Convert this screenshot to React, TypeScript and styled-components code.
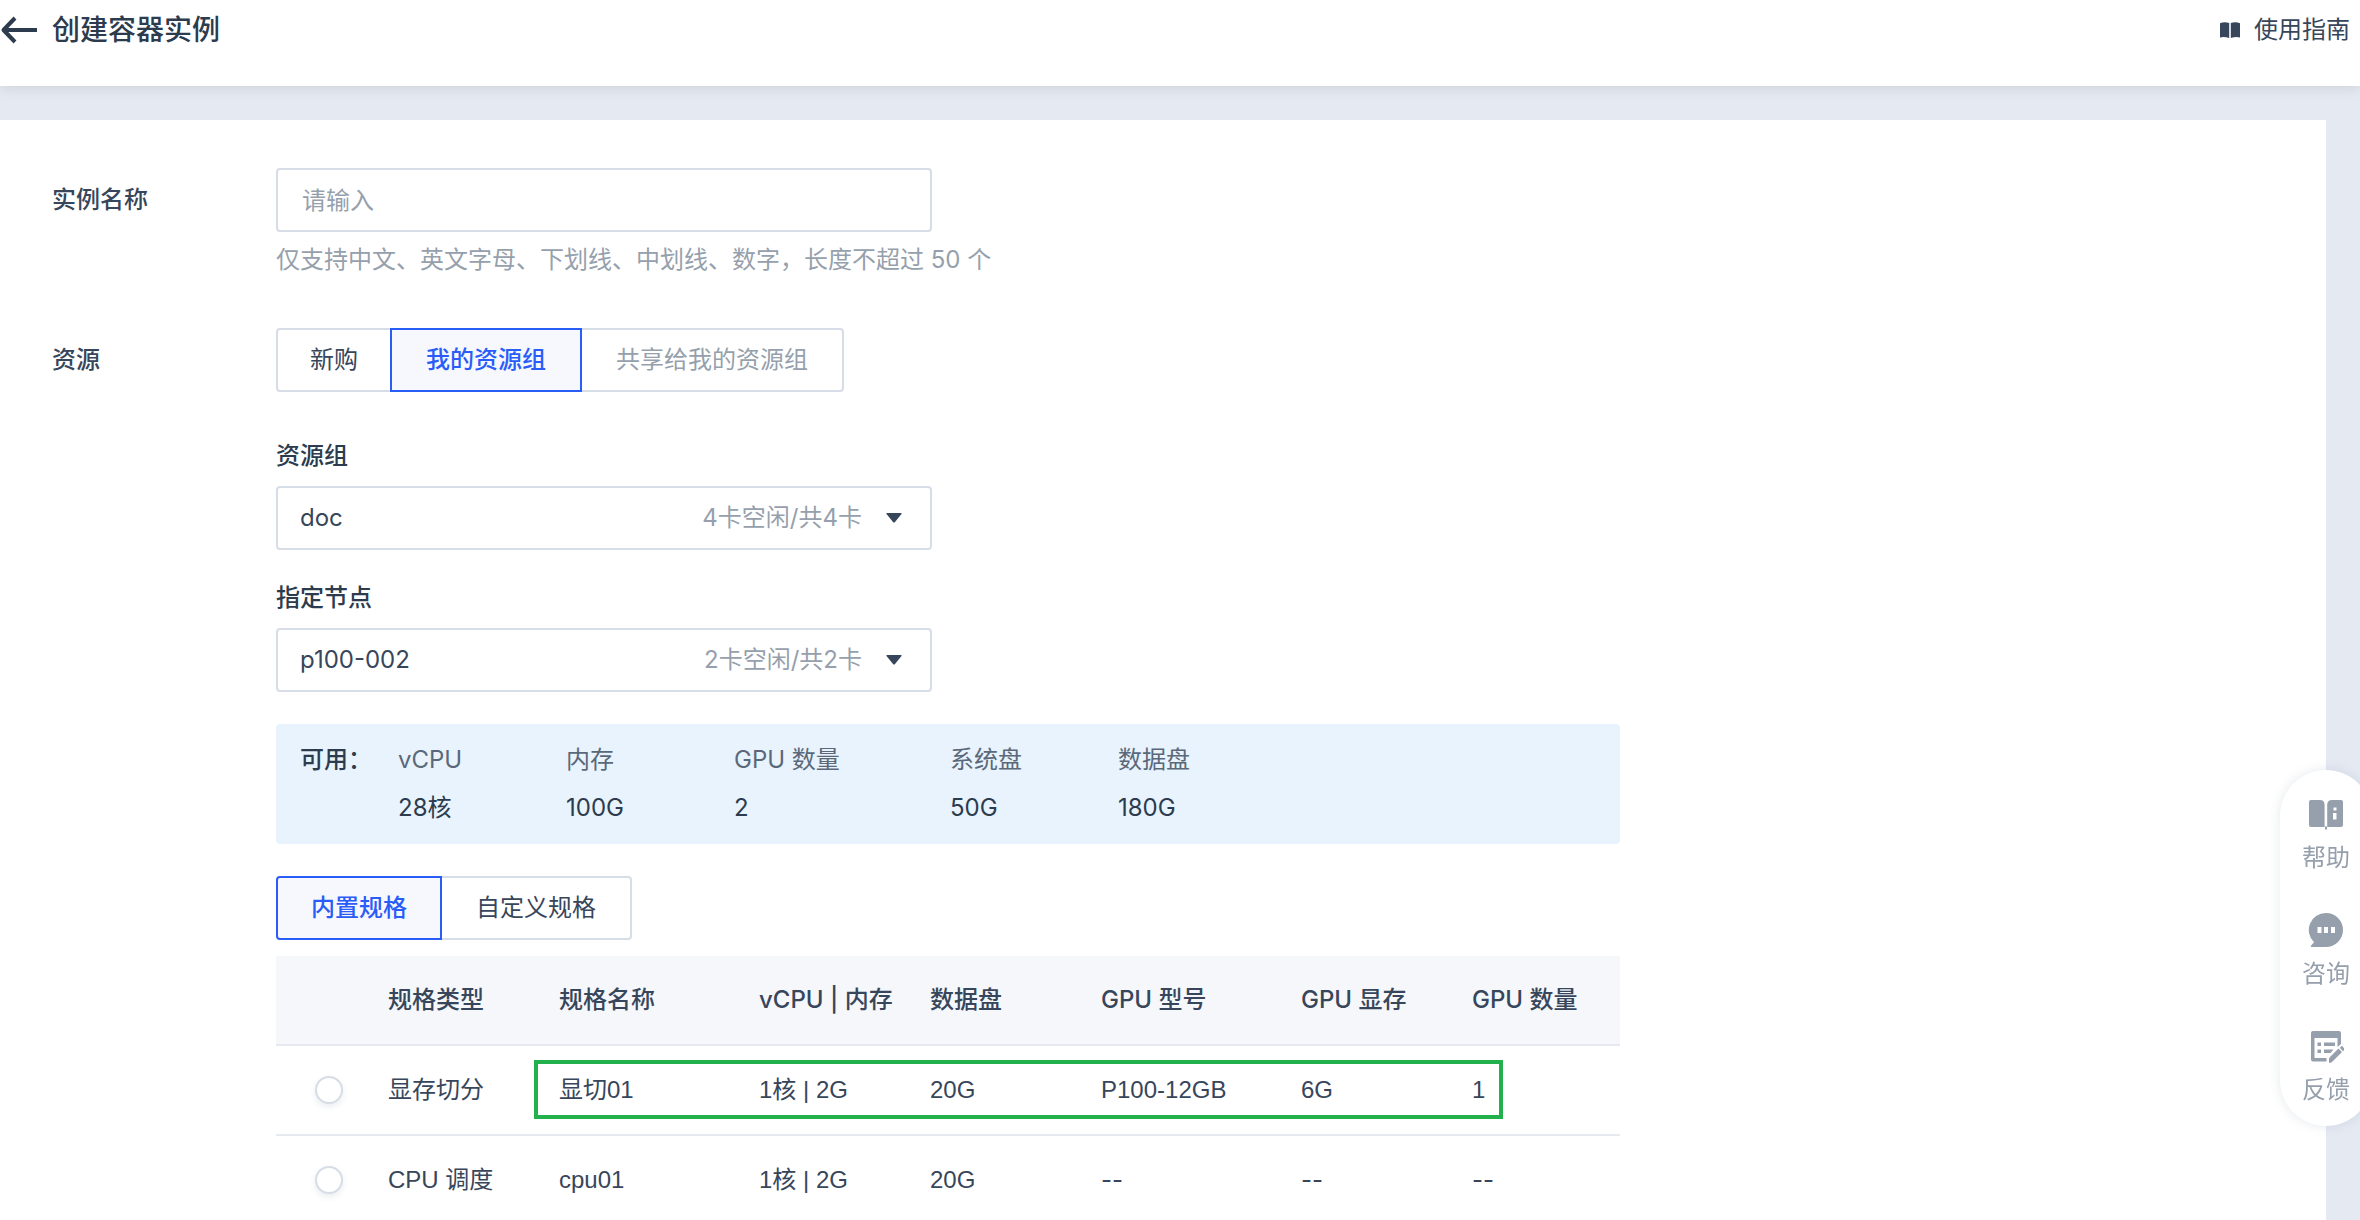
import React, { useState } from "react";
import styled, { createGlobalStyle } from "styled-components";

const color = {
  ink: "#2c3b4d",
  text: "#37465a",
  subtle: "#5a6879",
  muted: "#969fac",
  line: "#d6dde7",
  rule: "#e6eaf0",
  primary: "#2a5cf8",
  primaryBg: "#f6f8fe",
  page: "#e5e9f2",
};

const uiFont = `Inter, "Noto Sans CJK SC", sans-serif`;
const tableFont = `"Liberation Sans", "Noto Sans CJK SC", sans-serif`;

const GlobalStyle = createGlobalStyle`
  *, *::before, *::after { box-sizing: border-box; }
  body { margin: 0; background: ${color.page}; }
  button, input, select { font: inherit; color: inherit; margin: 0; }
`;

const Shell = styled.div`
  height: 100vh;
  display: flex;
  flex-direction: column;
  overflow: hidden;
  background: ${color.page};
  color: ${color.text};
  font-family: ${uiFont};
  font-size: 24px;
  line-height: 36px;
`;

const Header = styled.header`
  position: relative;
  z-index: 1;
  flex: none;
  display: flex;
  align-items: flex-start;
  justify-content: space-between;
  padding: 12px 10px 38px 0;
  background: #fff;
  box-shadow: 0 2px 12px rgba(100, 110, 100, 0.18);
`;

const TitleGroup = styled.div`
  display: flex;
  align-items: center;
  gap: 14px;
`;

const BackButton = styled.button`
  display: flex;
  width: 38px;
  height: 36px;
  padding: 0;
  border: 0;
  background: none;
  color: ${color.ink};
  cursor: pointer;
`;

const Title = styled.h1`
  margin: 0;
  font-size: 28px;
  line-height: 36px;
  font-weight: 500;
  color: ${color.ink};
`;

const GuideLink = styled.a`
  display: flex;
  align-items: center;
  gap: 14px;
  color: ${color.text};
  text-decoration: none;
`;

const Scroller = styled.main`
  flex: 1;
  min-height: 0;
  overflow: auto;
  scrollbar-width: none;
  padding: 34px 34px 0 0;
`;

const Panel = styled.form`
  display: flex;
  flex-direction: column;
  gap: 50px;
  padding: 48px 52px;
  background: #fff;
`;

const FormRow = styled.div`
  display: grid;
  grid-template-columns: 224px minmax(0, 1fr);
`;

const rowLabel = `
  line-height: 64px;
  font-weight: 500;
  color: ${color.text};
`;
const RowLabel = styled.label`${rowLabel}`;
const RowTitle = styled.span`${rowLabel}`;

const TextInput = styled.input`
  display: block;
  width: 100%;
  max-width: 656px;
  height: 64px;
  padding: 0 24px;
  border: 2px solid ${color.line};
  border-radius: 4px;
  background: #fff;
  outline: 0;
  &::placeholder { color: ${color.muted}; opacity: 1; }
`;

const Hint = styled.p`
  margin: 10px 0 0;
  color: ${color.muted};
`;

const Segmented = styled.div`
  display: flex;
  & > * + * { margin-left: -2px; }
`;

const Segment = styled.button<{ $width: number; $active?: boolean }>`
  position: relative;
  z-index: ${(p) => (p.$active ? 1 : 0)};
  width: ${(p) => p.$width}px;
  height: 64px;
  padding: 0;
  border: 2px solid ${(p) => (p.$active ? color.primary : color.line)};
  background: ${(p) => (p.$active ? color.primaryBg : "#fff")};
  color: ${(p) => (p.$active ? color.primary : color.text)};
  font-weight: ${(p) => (p.$active ? 500 : 400)};
  white-space: nowrap;
  cursor: pointer;
  &:first-child { border-radius: 4px 0 0 4px; }
  &:last-child { border-radius: 0 4px 4px 0; }
  &:disabled { color: ${color.muted}; cursor: not-allowed; }
`;

const Field = styled.div<{ $gap: number }>`
  display: flex;
  flex-direction: column;
  gap: 14px;
  max-width: 656px;
  margin-top: ${(p) => p.$gap}px;
`;

const FieldLabel = styled.label`
  line-height: 32px;
  font-weight: 500;
  color: ${color.ink};
`;

const SelectBox = styled.div`
  display: flex;
  align-items: center;
  height: 64px;
  padding-right: 28px;
  border: 2px solid ${color.line};
  border-radius: 4px;
`;

const Select = styled.select`
  flex: 1;
  min-width: 0;
  height: 60px;
  padding: 0 22px;
  border: 0;
  background: none;
  appearance: none;
  outline: 0;
`;

const SelectNote = styled.span`
  margin-right: 24px;
  color: ${color.muted};
`;

const Specs = styled.div`
  max-width: 1344px;
`;

const Quota = styled.dl`
  display: grid;
  grid-template-columns: 98px 168px 168px 216px 168px 1fr;
  margin: 32px 0;
  padding: 12px 24px;
  border-radius: 4px;
  background: #e8f3fd;
  line-height: 48px;
`;

const QuotaTitle = styled.dt`
  font-weight: 500;
  color: ${color.ink};
`;

const QuotaItem = styled.div`
  & > dt { color: ${color.subtle}; }
  & > dd { margin: 0; color: ${color.ink}; }
`;

const TableWrap = styled.div`
  position: relative;
  margin-top: 16px;
`;

const Table = styled.table`
  width: 100%;
  table-layout: fixed;
  border-collapse: separate;
  border-spacing: 0;
  font-family: ${tableFont};
`;

const Th = styled.th`
  height: 90px;
  padding: 0;
  border-bottom: 2px solid ${color.rule};
  background: #f5f7fb;
  font-family: ${uiFont};
  font-weight: 500;
  text-align: left;
  white-space: nowrap;
`;

const Td = styled.td<{ $empty?: boolean }>`
  height: 90px;
  padding: 0;
  border-bottom: 2px solid ${color.rule};
  font-family: ${(p) => (p.$empty ? uiFont : tableFont)};
  white-space: nowrap;
`;

const Radio = styled.input`
  display: block;
  width: 28px;
  height: 28px;
  margin: 0 0 0 39px;
  appearance: none;
  border: 2px solid ${color.line};
  border-radius: 50%;
  background: #fff;
  box-shadow: 0 3px 6px rgba(60, 80, 110, 0.1);
  &:checked { border: 8px solid ${color.primary}; }
`;

const Highlight = styled.div`
  position: absolute;
  top: 104px;
  left: 258px;
  right: 117px;
  height: 59px;
  border: 4px solid #22b14c;
  pointer-events: none;
`;

const Dock = styled.nav`
  position: fixed;
  z-index: 2;
  right: -12px;
  top: 770px;
  width: 92px;
  display: flex;
  flex-direction: column;
  align-items: center;
  gap: 36px;
  padding: 26px 0 18px;
  border-radius: 46px;
  background: #fff;
  box-shadow: 0 0 12px rgba(70, 90, 120, 0.14);
`;

const DockLink = styled.a`
  display: flex;
  flex-direction: column;
  align-items: center;
  gap: 8px;
  line-height: 36px;
  color: ${color.muted};
  text-decoration: none;
`;

const ArrowIcon = () => (
  <svg width="38" height="36" viewBox="0 0 38 36" fill="none" stroke="currentColor" strokeWidth="4" aria-hidden="true">
    <path d="M15 6 3.5 18 15 30M3.5 18H37" strokeLinejoin="round" />
  </svg>
);

const BookIcon = () => (
  <svg width="20" height="16" viewBox="0 0 20 16" fill="currentColor" aria-hidden="true">
    <path d="M0 1.2Q4.5-.8 9.2 1V16Q4.500 14.600 0 15.400ZM20 1.200Q15.500-.8 10.800 1V16Q15.500 14.600 20 15.400Z" />
  </svg>
);

const Caret = () => (
  <svg width="16" height="10" viewBox="0 0 16 10" fill={color.text} aria-hidden="true">
    <path d="M1 0H15Q16 0 15.500 1L9 9Q8 10 7 9L.5 1Q0 0 1 0Z" />
  </svg>
);

const HelpIcon = () => (
  <svg width="36" height="36" viewBox="0 0 36 36" fill="currentColor" aria-hidden="true">
    <path d="M3 4H12Q16.600 4 16.600 9V31H3Q1 31 1 29V6Q1 4 3 4Z" />
    <path fillRule="evenodd" d="M24 4H33Q35 4 35 6V29Q35 31 33 31H19.200V9Q19.200 4 24 4ZM25.500 11.500V14.500H28.500V11.500ZM25 17V23.500H28.500V17Z" />
    <path d="M17 30.500H19V33.500H17Z" />
  </svg>
);

const ChatIcon = () => (
  <svg width="36" height="36" viewBox="0 0 36 36" fill="currentColor" aria-hidden="true">
    <path fillRule="evenodd" d="M18 1A17 17 0 1 1 18 35H4Q2 35 3.200 33.500L6 30.200A17 17 0 0 1 18 1ZM9.500 15V21H13.500V15ZM16 15V21H20V15ZM23 15V21H27V15Z" />
  </svg>
);

const FeedbackIcon = () => (
  <svg width="36" height="36" viewBox="0 0 36 36" aria-hidden="true">
    <path fill="currentColor" fillRule="evenodd" d="M5 3H31Q33 3 33 5V16L29.500 19V10H6.500V30H18.500V33.500H5Q3 33.500 3 31.500V5Q3 3 5 3Z" />
    <path fill="currentColor" d="M9.500 14.500H13V18H9.500ZM16 14.500H27V18H16ZM9.500 21.500H13V25H9.500ZM16 21.500H25.500L22.500 25H16Z" />
    <path fill="currentColor" d="M30.500 20.500 34 24 25 33Q23.500 35 21 35V31Q21 29.500 22.500 28.500ZM34 17.800 37 21.300 35 23.200 31.800 19.700Z" />
  </svg>
);

const quota = [
  ["vCPU", "28核"],
  ["内存", "100G"],
  ["GPU 数量", "2"],
  ["系统盘", "50G"],
  ["数据盘", "180G"],
];

const columns = [
  { title: "规格类型", width: 171 },
  { title: "规格名称", width: 200 },
  { title: "vCPU | 内存", width: 171 },
  { title: "数据盘", width: 171 },
  { title: "GPU 型号", width: 200 },
  { title: "GPU 显存", width: 171 },
  { title: "GPU 数量", width: 148 },
];

const rows = [
  ["显存切分", "显切01", "1核 | 2G", "20G", "P100-12GB", "6G", "1"],
  ["CPU 调度", "cpu01", "1核 | 2G", "20G", "--", "--", "--"],
];

const dock = [
  { label: "帮助", Icon: HelpIcon },
  { label: "咨询", Icon: ChatIcon },
  { label: "反馈", Icon: FeedbackIcon },
];

export default function App() {
  const [source, setSource] = useState("mine");
  const [specKind, setSpecKind] = useState("builtin");

  return (
    <Shell>
      <GlobalStyle />
      <Header>
        <TitleGroup>
          <BackButton type="button" aria-label="返回"><ArrowIcon /></BackButton>
          <Title>创建容器实例</Title>
        </TitleGroup>
        <GuideLink href="#guide"><BookIcon />使用指南</GuideLink>
      </Header>

      <Scroller>
        <Panel onSubmit={(e) => e.preventDefault()}>
          <FormRow>
            <RowLabel htmlFor="name">实例名称</RowLabel>
            <div>
              <TextInput id="name" type="text" placeholder="请输入" aria-describedby="name-hint" />
              <Hint id="name-hint">仅支持中文、英文字母、下划线、中划线、数字，长度不超过 50 个</Hint>
            </div>
          </FormRow>

          <FormRow>
            <RowTitle id="resource">资源</RowTitle>
            <div>
              <Segmented role="group" aria-labelledby="resource">
                <Segment type="button" $width={116} $active={source === "new"} onClick={() => setSource("new")}>新购</Segment>
                <Segment type="button" $width={192} $active={source === "mine"} onClick={() => setSource("mine")}>我的资源组</Segment>
                <Segment type="button" $width={264} disabled>共享给我的资源组</Segment>
              </Segmented>

              <Field $gap={48}>
                <FieldLabel htmlFor="group">资源组</FieldLabel>
                <SelectBox>
                  <Select id="group"><option>doc</option></Select>
                  <SelectNote>4卡空闲/共4卡</SelectNote>
                  <Caret />
                </SelectBox>
              </Field>
              <Field $gap={32}>
                <FieldLabel htmlFor="node">指定节点</FieldLabel>
                <SelectBox>
                  <Select id="node"><option>p100-002</option></Select>
                  <SelectNote>2卡空闲/共2卡</SelectNote>
                  <Caret />
                </SelectBox>
              </Field>

              <Specs>
                <Quota>
                  <QuotaTitle>可用：</QuotaTitle>
                  {quota.map(([name, value]) => (
                    <QuotaItem key={name}>
                      <dt>{name}</dt>
                      <dd>{value}</dd>
                    </QuotaItem>
                  ))}
                </Quota>

                <Segmented role="group" aria-label="规格">
                  <Segment type="button" $width={166} $active={specKind === "builtin"} onClick={() => setSpecKind("builtin")}>内置规格</Segment>
                  <Segment type="button" $width={192} $active={specKind === "custom"} onClick={() => setSpecKind("custom")}>自定义规格</Segment>
                </Segmented>

                <TableWrap>
                  <Table>
                    <colgroup>
                      <col width={112} />
                      {columns.map((c) => <col key={c.title} width={c.width} />)}
                    </colgroup>
                    <thead>
                      <tr>
                        <Th />
                        {columns.map((c) => <Th key={c.title} scope="col">{c.title}</Th>)}
                      </tr>
                    </thead>
                    <tbody>
                      {rows.map((row) => (
                        <tr key={row[1]}>
                          <Td><Radio type="radio" name="spec" aria-label={row[1]} /></Td>
                          {row.map((cell, i) => <Td key={i} $empty={cell === "--"}>{cell}</Td>)}
                        </tr>
                      ))}
                    </tbody>
                  </Table>
                  <Highlight />
                </TableWrap>
              </Specs>
            </div>
          </FormRow>
        </Panel>
      </Scroller>

      <Dock aria-label="支持">
        {dock.map(({ label, Icon }) => (
          <DockLink key={label} href={`#${label}`}><Icon />{label}</DockLink>
        ))}
      </Dock>
    </Shell>
  );
}
